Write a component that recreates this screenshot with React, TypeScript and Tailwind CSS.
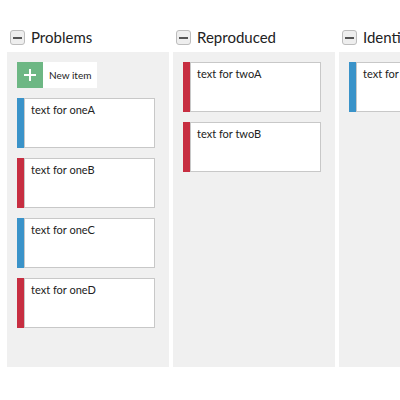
type Card = { id: string; text: string; color: "red" | "blue" };

const columns: { title: string; cards: Card[]; addButton?: boolean }[] = [
  {
    title: "Problems",
    addButton: true,
    cards: [
      { id: "oneA", text: "text for oneA", color: "blue" },
      { id: "oneB", text: "text for oneB", color: "red" },
      { id: "oneC", text: "text for oneC", color: "blue" },
      { id: "oneD", text: "text for oneD", color: "red" },
    ],
  },
  {
    title: "Reproduced",
    cards: [
      { id: "twoA", text: "text for twoA", color: "red" },
      { id: "twoB", text: "text for twoB", color: "red" },
    ],
  },
  {
    title: "Identified",
    cards: [{ id: "threeA", text: "text for threeA", color: "blue" }],
  },
];

function CollapseIcon() {
  return (
    <div className="w-[15px] h-[15px] rounded-[3px] border border-[#bdbdbd] bg-[#eeeeee] flex items-center justify-center shrink-0">
      <div className="w-[9px] h-[2px] bg-[#555]" />
    </div>
  );
}

export default function App() {
  return (
    <div className="w-[400px] h-[400px] overflow-hidden bg-white font-['Lato',sans-serif] text-[#222]">
      <div className="flex gap-[4px] pl-[7px] pt-[29px]">
        {columns.map((col) => (
          <div key={col.title} className="w-[162px] shrink-0">
            {/* Header */}
            <div className="flex items-center gap-[6px] pl-[3px] h-[17px]">
              <CollapseIcon />
              <span className="text-[15px] leading-none whitespace-nowrap">{col.title}</span>
            </div>

            {/* Lane */}
            <div className="mt-[6px] h-[315px] bg-[#f0f0f0] pt-[10px] pl-[10px] flex flex-col gap-[10px]">
              {col.addButton && (
                <button className="flex w-[80px] h-[26px] bg-white items-center">
                  <span className="w-[26px] h-[26px] bg-[#6db784] flex items-center justify-center">
                    <svg width="14" height="14" viewBox="0 0 14 14">
                      <path d="M7 1v12M1 7h12" stroke="white" strokeWidth="2" />
                    </svg>
                  </span>
                  <span className="pl-[6px] text-[10px] text-[#222]">New item</span>
                </button>
              )}
              {col.cards.map((card) => (
                <div key={card.id} className="flex w-[138px] h-[50px] shrink-0">
                  <div className={`w-[7px] ${card.color === "red" ? "bg-[#c72e41]" : "bg-[#3a93c9]"}`} />
                  <div className="flex-1 bg-white border border-[#c8c8c8] pl-[6px] pt-[4px] text-[11px] leading-[14px] whitespace-nowrap overflow-hidden">
                    {card.text}
                  </div>
                </div>
              ))}
            </div>
          </div>
        ))}
      </div>
    </div>
  );
}
